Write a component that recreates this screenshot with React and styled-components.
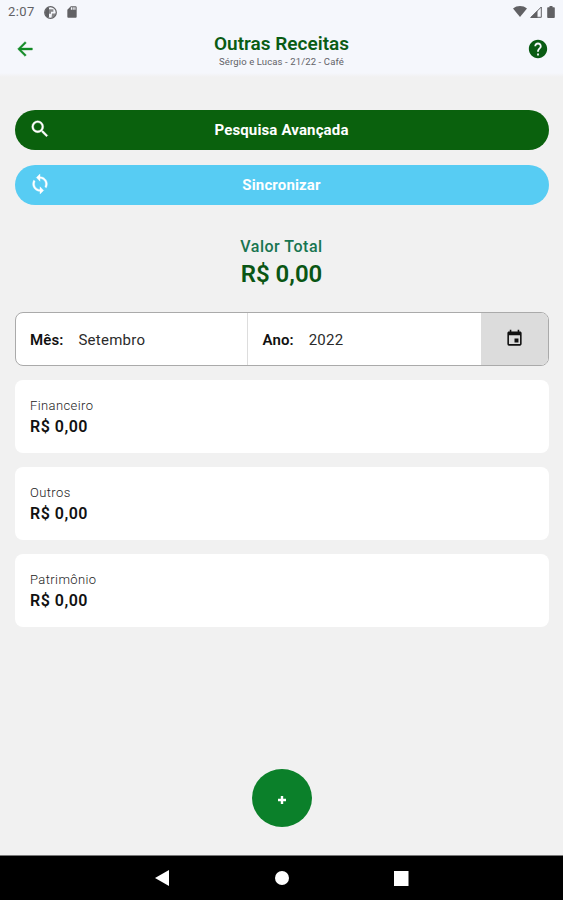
import React from "react";
import styled, { createGlobalStyle } from "styled-components";
import {
  MdArrowBack,
  MdHelp,
  MdSearch,
  MdSync,
  MdEvent,
  MdSdCard,
} from "react-icons/md";

const GlobalStyle = createGlobalStyle`
  * { box-sizing: border-box; }
  body { margin: 0; font-family: Roboto, "Noto Sans", sans-serif; }
  button { font: inherit; border: 0; padding: 0; background: none; }
`;

const Screen = styled.div`
  display: flex;
  flex-direction: column;
  height: 900px;
  background: #f1f1f1;
  color: #111;
`;

const Top = styled.header`
  height: 77px;
  background: linear-gradient(#f5f7fc 73px, #f1f1f1 77px);
`;

const StatusBar = styled.div`
  display: flex;
  align-items: center;
  justify-content: space-between;
  height: 24px;
  padding: 0 6px 0 8px;
  color: #616164;
`;

const StatusGroup = styled.div`
  display: flex;
  align-items: center;
  gap: ${(p) => p.$gap}px;
  padding-bottom: ${(p) => p.$lift || 0}px;
  svg { display: block; }
`;

const Clock = styled.span`
  font-size: 13px;
  line-height: 24px;
  letter-spacing: 0.4px;
  margin-right: 1px;
`;

const AppBar = styled.div`
  display: grid;
  grid-template-columns: 34px 1fr 34px;
  align-items: center;
  height: 50px;
  padding: 0 8px;
`;

const IconButton = styled.button`
  display: flex;
  align-items: center;
  justify-content: center;
  height: 34px;
  color: ${(p) => p.$color};
`;

const BackButton = styled(IconButton)`
  path:not([fill="none"]) {
    stroke: currentColor;
    stroke-width: 0.5px;
  }
`;

const Titles = styled.div`
  display: flex;
  flex-direction: column;
  align-items: center;
`;

const Title = styled.h1`
  margin: 0;
  padding-top: 2px;
  font-size: 19px;
  line-height: 23px;
  font-weight: 600;
  color: #0a5c14;
`;

const Subtitle = styled.div`
  font-size: 9.5px;
  line-height: 14px;
  letter-spacing: 0.12px;
  color: #626267;
`;

const Content = styled.main`
  display: flex;
  flex-direction: column;
  flex: 1;
  padding: 32.6px 14.5px 0;
`;

const Pill = styled.button`
  display: grid;
  grid-template-columns: 52px 1fr 52px;
  align-items: center;
  height: 40px;
  margin-bottom: 15px;
  border-radius: 20px;
  background: ${(p) => p.$bg};
  color: #fff;
  svg {
    display: block;
    margin: 0 0 2px 14.5px;
  }
  path:not([fill="none"]) {
    stroke: #fff;
    stroke-width: 0.4px;
  }
`;

const PillLabel = styled.span`
  font-size: 15px;
  line-height: 20px;
  font-weight: 700;
  letter-spacing: 0.15px;
  text-align: center;
`;

const Total = styled.section`
  display: flex;
  flex-direction: column;
  align-items: center;
  height: 92px;
  padding-top: 17px;
`;

const TotalLabel = styled.div`
  font-size: 16px;
  line-height: 20px;
  font-weight: 500;
  letter-spacing: 0.5px;
  color: #187550;
`;

const TotalValue = styled.div`
  font-size: 24px;
  line-height: 35px;
  font-weight: 600;
  color: #0a5614;
`;

const Period = styled.section`
  display: grid;
  grid-template-columns: 231.5px 1fr 67px;
  height: 54px;
  margin-bottom: 14px;
  border: 1px solid #aaa;
  border-radius: 8px;
  background: #fff;
  overflow: hidden;
`;

const Field = styled.div`
  display: flex;
  align-items: center;
  gap: 15px;
  padding-top: 2px;
  padding-left: 14.5px;
  border-left: ${(p) => (p.$divided ? "1px solid #ddd" : "0")};
  font-size: 15px;
  letter-spacing: 0.25px;
  color: #2b2b2b;
`;

const FieldLabel = styled.span`
  font-weight: 600;
  letter-spacing: 0.1px;
  color: #111;
`;

const CalendarButton = styled.button`
  display: flex;
  align-items: center;
  justify-content: center;
  background: #dcdcdc;
  color: #111;
`;

const Card = styled.article`
  height: 73px;
  margin-bottom: 14.3px;
  padding: 16px 15px 0 15.5px;
  border-radius: 8px;
  background: #fff;
`;

const CardName = styled.div`
  font-size: 13px;
  line-height: 20px;
  font-weight: 300;
  letter-spacing: 0.4px;
  color: #222;
`;

const CardValue = styled.div`
  font-size: 16px;
  line-height: 22px;
  font-weight: 600;
  letter-spacing: 0.5px;
`;

const AddButton = styled.button`
  display: flex;
  align-items: center;
  justify-content: center;
  align-self: center;
  width: 60px;
  height: 58px;
  margin: auto 0 28px;
  padding-top: 3px;
  border-radius: 50%;
  background: #0b802a;
  color: #fff;
`;

const NavBar = styled.nav`
  display: flex;
  align-items: center;
  justify-content: center;
  gap: 105px;
  height: 45px;
  border-top: 1px solid #777;
  background: #000;
  svg { display: block; }
`;

const cards = ["Financeiro", "Outros", "Patrimônio"];

export default function App() {
  return (
    <>
      <GlobalStyle />
      <Screen>
        <Top>
          <StatusBar>
            <StatusGroup $gap={8}>
              <Clock>2:07</Clock>
              <svg width="13" height="13" viewBox="0 0 13 13">
                <circle cx="6.5" cy="6.5" r="5.8" fill="none" stroke="currentColor" strokeWidth="1.2" />
                <path d="M1 6.5A5.5 5.5 0 0 1 5 1.2v10.6A5.5 5.5 0 0 1 1 6.5z" fill="currentColor" />
                <path d="M5 3.2h4.4v2.6H7v2H5zM8 7.6h4a5.5 5.5 0 0 1-4.5 4.4z" fill="currentColor" fillOpacity="0.75" />
              </svg>
              <MdSdCard size={14} />
            </StatusGroup>
            <StatusGroup $gap={3} $lift={1}>
              <svg width="14" height="11" viewBox="0 0 14 11">
                <path d="M0 2.5C4-.8 10-.8 14 2.5L7 11z" fill="currentColor" />
              </svg>
              <svg width="12" height="12" viewBox="0 0 12 12">
                <path d="M1 11.3 11.3 1v10.3z" fill="none" stroke="currentColor" />
                <path d="M0 12 7.5 4.5V12z" fill="currentColor" />
              </svg>
              <svg width="12" height="12" viewBox="0 0 12 12">
                <path d="M4.5 0h3v1.2H9q.8 0 .8.8v9q0 1-.8 1H3q-.8 0-.8-1V2q0-.8.8-.8h1.5z" fill="currentColor" />
              </svg>
            </StatusGroup>
          </StatusBar>
          <AppBar>
            <BackButton $color="#128a26" aria-label="Voltar">
              <MdArrowBack size={22} />
            </BackButton>
            <Titles>
              <Title>Outras Receitas</Title>
              <Subtitle>Sérgio e Lucas - 21/22 - Café</Subtitle>
            </Titles>
            <IconButton $color="#0a5c14" aria-label="Ajuda">
              <MdHelp size={22} />
            </IconButton>
          </AppBar>
        </Top>
        <Content>
          <Pill $bg="#0a610d">
            <MdSearch size={22} />
            <PillLabel>Pesquisa Avançada</PillLabel>
          </Pill>
          <Pill $bg="#57ccf3">
            <MdSync size={22} />
            <PillLabel>Sincronizar</PillLabel>
          </Pill>
          <Total>
            <TotalLabel>Valor Total</TotalLabel>
            <TotalValue>R$ 0,00</TotalValue>
          </Total>
          <Period>
            <Field>
              <FieldLabel>Mês:</FieldLabel>
              <span>Setembro</span>
            </Field>
            <Field $divided>
              <FieldLabel>Ano:</FieldLabel>
              <span>2022</span>
            </Field>
            <CalendarButton aria-label="Escolher período">
              <MdEvent size={19} />
            </CalendarButton>
          </Period>
          {cards.map((name) => (
            <Card key={name}>
              <CardName>{name}</CardName>
              <CardValue>R$ 0,00</CardValue>
            </Card>
          ))}
          <AddButton aria-label="Adicionar">
            <svg width="8" height="8" viewBox="0 0 8 8">
              <path d="M4 0v8M0 4h8" stroke="currentColor" strokeWidth="2.4" />
            </svg>
          </AddButton>
        </Content>
        <NavBar>
          <svg width="15" height="16" viewBox="0 0 15 16">
            <path d="M0 8 14 0v16z" fill="#fff" />
          </svg>
          <svg width="14" height="14" viewBox="0 0 14 14">
            <circle cx="7" cy="7" r="7" fill="#fff" />
          </svg>
          <svg width="15" height="15" viewBox="0 0 15 15">
            <rect width="14.5" height="15" fill="#fff" />
          </svg>
        </NavBar>
      </Screen>
    </>
  );
}
